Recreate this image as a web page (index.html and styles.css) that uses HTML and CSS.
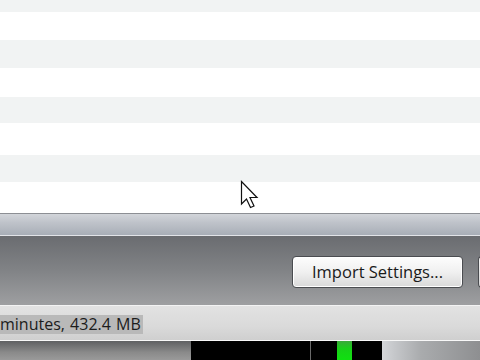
FILE: index.html
```html
<!DOCTYPE html>
<html>
<head>
<meta charset="utf-8">
<link rel="stylesheet" href="styles.css">
</head>
<body>
<div class="screen">
  <div class="list">
    <div class="row alt h12"></div>
    <div class="row h28"></div>
    <div class="row alt h28"></div>
    <div class="row h29"></div>
    <div class="row alt h26"></div>
    <div class="row h32"></div>
    <div class="row alt h27"></div>
    <div class="row h31"></div>
  </div>
  <div class="divider"></div>
  <div class="panel">
    <button class="btn">Import Settings...</button>
    <div class="btn-edge"></div>
  </div>
  <div class="status">
    <span class="status-text">minutes, 432.4 MB</span>
  </div>
  <div class="bottom">
    <div class="bottom-left"></div>
    <div class="meter">
      <div class="meter-a"></div>
      <div class="meter-sep"></div>
      <div class="meter-b"></div>
      <div class="meter-green"></div>
      <div class="meter-c"></div>
    </div>
    <div class="bottom-right"></div>
  </div>
  <svg class="cursor" width="20" height="30" viewBox="0 0 20 30">
    <path d="M1.5 1.5 L1.5 24 L6.5 19 L10.5 27.5 L14 26 L10 17.5 L17 17.5 Z" fill="#fff" stroke="#111" stroke-width="1.2" stroke-linejoin="miter"/>
  </svg>
</div>
</body>
</html>
```
FILE: styles.css
```css
* { box-sizing: border-box; }
html, body { margin: 0; padding: 0; }
body { width: 480px; height: 360px; overflow: hidden; background: #fff; }
.screen { position: relative; width: 480px; height: 360px; display: flex; flex-direction: column; overflow: hidden; }
.list { display: flex; flex-direction: column; }
.row { background: #ffffff; }
.row.alt { background: #f1f3f3; }
.h12 { height: 12px; }
.h26 { height: 26px; }
.h27 { height: 27px; }
.h28 { height: 28px; }
.h29 { height: 29px; }
.h31 { height: 31px; }
.h32 { height: 32px; }
.divider {
  height: 23px;
  border-top: 1px solid #8c8f94;
  border-bottom: 1px solid #e2e4e8;
  background: linear-gradient(#d2d5da, #bfc3ca 40%, #a8aeb7);
}
.panel {
  height: 69px;
  background: linear-gradient(#6a6c70, #818386 50%, #9e9fa1);
  display: flex;
  align-items: flex-start;
  padding: 20px 0 0 292px;
  gap: 15px;
  overflow: hidden;
}
.btn {
  flex-shrink: 0;
  width: 171px;
  height: 32px;
  border: 1px solid #4a4c50;
  border-radius: 4px;
  background: linear-gradient(#fdfdfd, #f0f0f0 50%, #d9d9d9);
  font-family: "Open Sans", sans-serif;
  font-size: 16.5px;
  color: #1a1a1a;
  padding: 0 0 1px 0;
  box-shadow: inset 0 0 0 1px #ffffff;
}
.btn-edge {
  flex-shrink: 0;
  width: 10px;
  height: 32px;
  border: 1px solid #4a4c50;
  border-right: none;
  border-radius: 4px 0 0 4px;
  background: linear-gradient(#f5f5f5, #d6d6d6);
}
.status {
  height: 36px;
  border-top: 1px solid #f3f3f3;
  border-bottom: 1px solid #f8f8f8;
  background: linear-gradient(#e2e2e2, #dadada 60%, #cfcfcf);
  display: flex;
  align-items: center;
  padding-top: 2px;
}
.status-text {
  font-family: "Open Sans", sans-serif;
  font-size: 16px;
  line-height: 19px;
  color: #1c1c1c;
  background: #b9b9b9;
  padding: 0 2px 0 0;
  word-spacing: 1px;
}
.bottom { flex: 1; display: flex; }
.bottom-left { width: 191px; background: linear-gradient(#5f6062, #8a8a8a 60%, #9a9a9a); }
.meter { width: 191px; display: flex; background: #000; }
.meter-a { width: 119px; }
.meter-sep { width: 1px; background: #6a6a6a; }
.meter-b { width: 26px; }
.meter-green { width: 15px; background: linear-gradient(#3aa83a, #18d018 40%, #10e010); }
.meter-c { flex: 1; }
.bottom-right { flex: 1; background: linear-gradient(90deg, #d4d6d9, #c6c8cb 12%, #a9abad 40%, #8e8f91); }
.cursor { position: absolute; left: 240px; top: 180px; }
```
